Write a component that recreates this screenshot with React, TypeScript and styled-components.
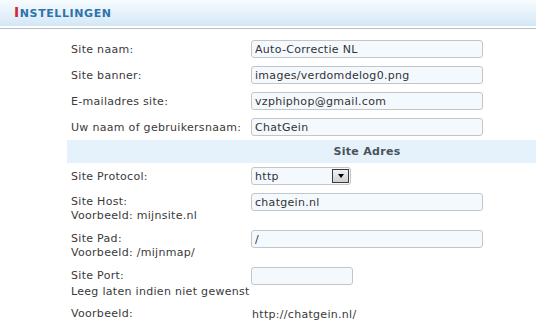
import React from 'react';
import styled, { createGlobalStyle } from "styled-components";

const GlobalStyle = createGlobalStyle`
  html, body {
    margin: 0;
    padding: 0;
    background: #ffffff;
    overflow: hidden;
  }
  body {
    font-family: "DejaVu Sans", Verdana, sans-serif;
    font-size: 11px;
    color: #3a3a3a;
  }
`

const Header = styled.div`
  height: 26px;
  background: linear-gradient(to bottom, #f6fbfe 0%, #e6f2fb 50%, #d3e7f6 100%);
  display: flex;
  align-items: flex-end;
  padding: 0 0 7px 14px;
  box-sizing: border-box;
`

const HeaderTitle = styled.div`
  font-weight: bold;
  font-size: 11px;
  letter-spacing: 0.6px;
  color: #2d73ad;
  line-height: 1;
`

const FirstLetter = styled.span`
  color: #d7282b;
  font-size: 14px;
  letter-spacing: 0.6px;
`

const Rule = styled.div`
  margin-top: 2px;
  height: 1px;
  background: #b6c2cb;
`

const Form = styled.div`
  margin: 7px 0 0 67px;
  display: flex;
  flex-direction: column;
  letter-spacing: 0.3px;
`

const Row = styled.div<{ tall?: boolean }>`
  display: grid;
  grid-template-columns: 180px 1fr;
  height: ${({ tall }) => (tall ? "37px" : "26px")};
  align-items: ${({ tall }) => (tall ? "start" : "center")};
`

const Label = styled.div<{ tall?: boolean }>`
  padding-left: 4px;
  padding-top: ${({ tall }) => (tall ? "6px" : "2px")};
  line-height: 14px;
  white-space: nowrap;
`

const Hint = styled.div<{ gap?: number }>`
  line-height: 14px;
  margin-top: ${({ gap }) => gap || 0}px;
`

const Field = styled.div<{ tall?: boolean }>`
  padding-left: 4px;
  padding-top: ${({ tall }) => (tall ? "4px" : "0")};
  display: flex;
  align-items: center;
`

const TextInput = styled.input<{ w?: number }>`
  box-sizing: border-box;
  width: ${({ w }) => w || 232}px;
  height: 18px;
  margin: 0;
  padding: 0 3px;
  border: 1px solid #c3c6c9;
  border-radius: 3px;
  background: #f4f9fe;
  font-family: "DejaVu Sans", Verdana, sans-serif;
  font-size: 11px;
  letter-spacing: 0.3px;
  color: #333333;
  outline: none;
`

/* the original table is 600px wide and clipped by the window,
   so the title sits centred on that wider span */
const Section = styled.div`
  height: 23px;
  background: #e5f2fb;
  display: flex;
  align-items: center;
  justify-content: center;
  padding-left: 131px;
  font-weight: bold;
  color: #4b5258;
`

const Select = styled.div`
  box-sizing: border-box;
  width: 100px;
  height: 18px;
  border: 1px solid #c3c6c9;
  border-radius: 3px;
  background: #f4f9fe;
  display: flex;
  align-items: center;
  justify-content: space-between;
  padding: 0 1px 0 3px;
  color: #333333;
`

const SelectButton = styled.div`
  box-sizing: border-box;
  width: 17px;
  height: 14px;
  border: 1px solid #3c3c3c;
  background: linear-gradient(to bottom, #f2f2f2, #cfcfcf);
  display: flex;
  align-items: center;
  justify-content: center;
`

const Arrow = styled.i`
  width: 0;
  height: 0;
  border-left: 3.5px solid transparent;
  border-right: 3.5px solid transparent;
  border-top: 4px solid #000000;
`

const Value = styled.div`
  padding: 2px 0 0 5px;
`

export default function App() {
  return (
    <>
      <GlobalStyle />
      <Header>
        <HeaderTitle>
          <FirstLetter>I</FirstLetter>NSTELLINGEN
        </HeaderTitle>
      </Header>
      <Rule />
      <Form>
        <Row>
          <Label>Site naam:</Label>
          <Field><TextInput defaultValue="Auto-Correctie NL" /></Field>
        </Row>
        <Row>
          <Label>Site banner:</Label>
          <Field><TextInput defaultValue="images/verdomdelog0.png" /></Field>
        </Row>
        <Row>
          <Label>E-mailadres site:</Label>
          <Field><TextInput defaultValue="vzphiphop@gmail.com" /></Field>
        </Row>
        <Row>
          <Label>Uw naam of gebruikersnaam:</Label>
          <Field><TextInput defaultValue="ChatGein" /></Field>
        </Row>
        <Section>Site Adres</Section>
        <Row>
          <Label>Site Protocol:</Label>
          <Field>
            <Select>
              <span>http</span>
              <SelectButton><Arrow /></SelectButton>
            </Select>
          </Field>
        </Row>
        <Row tall>
          <Label tall>Site Host:<Hint>Voorbeeld: mijnsite.nl</Hint></Label>
          <Field tall><TextInput defaultValue="chatgein.nl" /></Field>
        </Row>
        <Row tall>
          <Label tall>Site Pad:<Hint>Voorbeeld: /mijnmap/</Hint></Label>
          <Field tall><TextInput defaultValue="/" /></Field>
        </Row>
        <Row tall>
          <Label tall>Site Port:<Hint gap={2}>Leeg laten indien niet gewenst</Hint></Label>
          <Field tall><TextInput w={102} defaultValue="" /></Field>
        </Row>
        <Row>
          <Label>Voorbeeld:</Label>
          <Value>http://chatgein.nl/</Value>
        </Row>
      </Form>
    </>
  );
}
